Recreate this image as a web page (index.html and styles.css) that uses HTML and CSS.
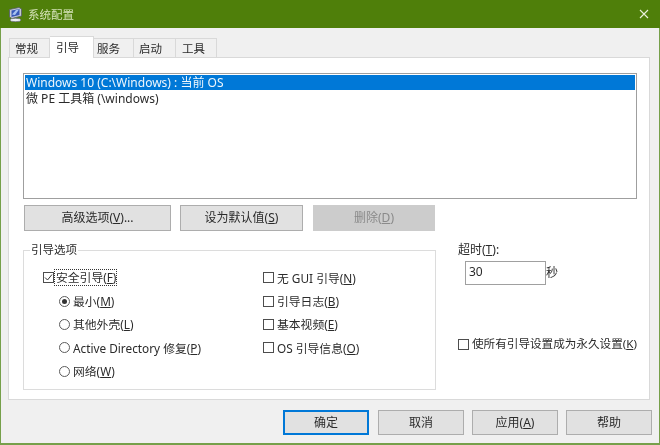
FILE: index.html
```html
<!DOCTYPE html>
<html lang="zh-CN">
<head>
<meta charset="utf-8">
<title>系统配置</title>
<link rel="stylesheet" href="styles.css">
</head>
<body>
<div class="window">
  <header class="titlebar">
    <svg class="app-icon" width="13" height="15" viewBox="0 0 13 15">
      <path d="M0.5 2.5 L10 0.5 L12.5 2 L12.5 9 L3 11.5 L0.5 10 Z" fill="#c4c9d4" stroke="#565c6b" stroke-width="0.8"/>
      <path d="M2.5 3.5 L10.5 2 L10.5 8 L2.5 10 Z" fill="#3658b8"/>
      <path d="M3 7.5 L7 3 L10 2.6 L6 8 Z" fill="#a8c2f0"/>
      <ellipse cx="6.5" cy="13" rx="5.5" ry="1.7" fill="#eceef2" stroke="#6d7380" stroke-width="0.8"/>
    </svg>
    <span class="title">系统配置</span>
    <svg class="close" width="12" height="12" viewBox="0 0 12 12"><path d="M2 2 L10 10 M10 2 L2 10" stroke="#eaf0dc" stroke-width="1.1" fill="none"/></svg>
  </header>
  <div class="content">
    <nav class="tabs">
      <span class="tab t1">常规</span>
      <span class="tab active">引导</span>
      <span class="tab t3">服务</span>
      <span class="tab t4">启动</span>
      <span class="tab t5">工具</span>
    </nav>
    <main class="panel">
      <div class="listbox">
        <div class="row selected">Windows 10 (C:\Windows) : 当前 OS</div>
        <div class="row">微 PE 工具箱 (\windows)</div>
      </div>
      <div class="list-actions">
        <button class="btn a1">高级选项(<u>V</u>)...</button>
        <button class="btn a2">设为默认值(<u>S</u>)</button>
        <button class="btn a3 disabled">删除(<u>D</u>)</button>
      </div>
      <div class="lower">
        <fieldset class="group">
          <legend>引导选项</legend>
          <div class="options">
            <div class="col-left">
              <label class="opt"><span class="cb"><svg width="11" height="11" viewBox="0 0 11 11"><path d="M2 5.5 L4.5 8 L9 2.5" stroke="#333" stroke-width="1" fill="none"/></svg></span><span class="focus">安全引导(<u>F</u>)</span></label>
              <label class="opt sub"><span class="radio on"></span><span>最小(<u>M</u>)</span></label>
              <label class="opt sub"><span class="radio"></span><span>其他外壳(<u>L</u>)</span></label>
              <label class="opt sub"><span class="radio"></span><span>Active Directory 修复(<u>P</u>)</span></label>
              <label class="opt sub"><span class="radio"></span><span>网络(<u>W</u>)</span></label>
            </div>
            <div class="col-right">
              <label class="opt"><span class="cb"></span><span>无 GUI 引导(<u>N</u>)</span></label>
              <label class="opt"><span class="cb"></span><span>引导日志(<u>B</u>)</span></label>
              <label class="opt"><span class="cb"></span><span>基本视频(<u>E</u>)</span></label>
              <label class="opt"><span class="cb"></span><span>OS 引导信息(<u>O</u>)</span></label>
            </div>
          </div>
        </fieldset>
        <aside class="side">
          <div class="timeout-label">超时(<u>T</u>):</div>
          <div class="timeout-row"><span class="input">30</span><span class="unit">秒</span></div>
          <label class="opt permanent"><span class="cb"></span><span class="permanent-text">使所有引导设置成为永久设置(<u>K</u>)</span></label>
        </aside>
      </div>
    </main>
    <footer class="footer">
      <button class="btn fb default">确定</button>
      <button class="btn fb">取消</button>
      <button class="btn fb">应用(<u>A</u>)</button>
      <button class="btn fb">帮助</button>
    </footer>
  </div>
</div>
</body>
</html>
```
FILE: styles.css
```css
* { box-sizing: border-box; }
html, body { margin: 0; padding: 0; }
body {
  width: 660px;
  height: 445px;
  overflow: hidden;
  font-family: "Noto Sans", "Noto Sans CJK SC", sans-serif;
  font-size: 12px;
  line-height: 16px;
  color: #2b2b2b;
  background: #f0f0f0;
}
u { text-underline-offset: 1px; }
.window {
  width: 660px;
  height: 445px;
  display: flex;
  flex-direction: column;
  border: 1px solid #76a04a;
  border-top: 0;
  border-bottom-width: 2px;
  filter: blur(0.35px);
}
.titlebar {
  height: 28px;
  margin: 0 -1px;
  background: #4f7f0a;
  display: flex;
  align-items: center;
  padding: 0 10px 0 9px;
  color: #d5e2b8;
}
.app-icon { margin-right: 6px; flex: none; }
.title { font-size: 11.5px; flex: 1; padding-top: 1px; }
.close { flex: none; }
.content {
  flex: 1;
  padding: 8px 9px 0 7px;
  background: #f0f0f0;
  display: flex;
  flex-direction: column;
}
.tabs {
  display: flex;
  align-items: flex-end;
  height: 21px;
  padding-left: 1px;
  position: relative;
  z-index: 1;
}
.tab {
  height: 19px;
  background: #f0f0f0;
  border: 1px solid #d9d9d9;
  border-left: 0;
  border-bottom: 0;
  display: flex;
  align-items: center;
  font-size: 11.5px;
  padding-top: 2px;
}
.t1 { width: 41px; padding-left: 5px; border-left: 1px solid #d9d9d9; }
.t3 { width: 40px; padding-left: 3px; }
.t4 { width: 42px; padding-left: 5px; }
.t5 { width: 41px; padding-left: 6px; }
.tab.active {
  width: 44px;
  height: 22px;
  margin-bottom: -1px;
  background: #fff;
  border-top: 1px solid #d9d9d9;
  padding: 0 0 0 6px;
}
.panel {
  height: 343px;
  background: #fff;
  border: 1px solid #d9d9d9;
  padding: 15px 12px 0 14px;
}
.listbox {
  height: 126px;
  border: 1px solid #9f9f9f;
  padding: 1px;
  background: #fff;
}
.row { height: 15px; line-height: 15px; padding-left: 1px; }
.row.selected { background: #0078d7; color: #eef6fc; }
.row + .row { margin-top: 1px; }
.list-actions {
  display: flex;
  margin-top: 6px;
  padding-left: 1px;
}
.btn {
  height: 26px;
  padding: 0;
  background: #e1e1e1;
  border: 1px solid #adadad;
  font: inherit;
  color: inherit;
  display: flex;
  align-items: center;
  justify-content: center;
}
.a1 { width: 147px; }
.a2 { width: 123px; margin-left: 9px; }
.a3 { width: 122px; margin-left: 10px; }
.btn.disabled { background: #cccccc; border-color: #cccccc; color: #8a8a8a; }
.lower { display: flex; margin-top: 11px; }
.group {
  flex: none;
  width: 413px;
  height: 148px;
  margin: 0;
  padding: 0 0 0 19px;
  border: 1px solid #dcdcdc;
  min-width: 0;
}
legend {
  margin-left: -13px;
  padding: 0 1px;
  line-height: 16px;
  font-size: 11.5px;
}
.options { display: flex; padding-top: 8px; }
.col-left { width: 220px; }
.opt {
  display: flex;
  align-items: center;
  height: 23.4px;
  white-space: nowrap;
  font-size: 11.8px;
}
.sub { padding-left: 16px; }
.cb {
  width: 11px;
  height: 11px;
  border: 1px solid #4d4d4d;
  background: #fff;
  margin-right: 3px;
  flex: none;
  display: block;
  line-height: 0;
}
.cb svg { margin: -1px 0 0 -1px; display: block; }
.focus {
  outline: 1px dotted #333;
  padding: 0 0 0 1px;
  margin-left: -2px;
  height: 15px;
  line-height: 15px;
}
.radio {
  width: 11px;
  height: 11px;
  border: 1px solid #5c5c5c;
  border-radius: 50%;
  margin-right: 3px;
  flex: none;
  background: #fff;
  display: flex;
  align-items: center;
  justify-content: center;
}
.radio.on::after {
  content: "";
  width: 5px;
  height: 5px;
  border-radius: 50%;
  background: #333;
}
.side { margin-left: 22px; flex: 1; }
.timeout-label { height: 16px; }
.timeout-row { display: flex; align-items: center; margin: 3px 0 0 7px; }
.input {
  width: 81px;
  height: 24px;
  border: 1px solid #a0a0a0;
  background: #fff;
  padding: 2px 0 0 3px;
  line-height: 16px;
}
.permanent { margin-top: 51px; height: 16px; }
.permanent-text { font-size: 11.6px; }
.footer {
  display: flex;
  justify-content: flex-end;
  gap: 8px;
  margin: 10px -2px 0 0;
}
.fb { width: 86px; height: 25px; }
.fb.default { border: 2px solid #0078d7; margin-right: 1px; }
```
